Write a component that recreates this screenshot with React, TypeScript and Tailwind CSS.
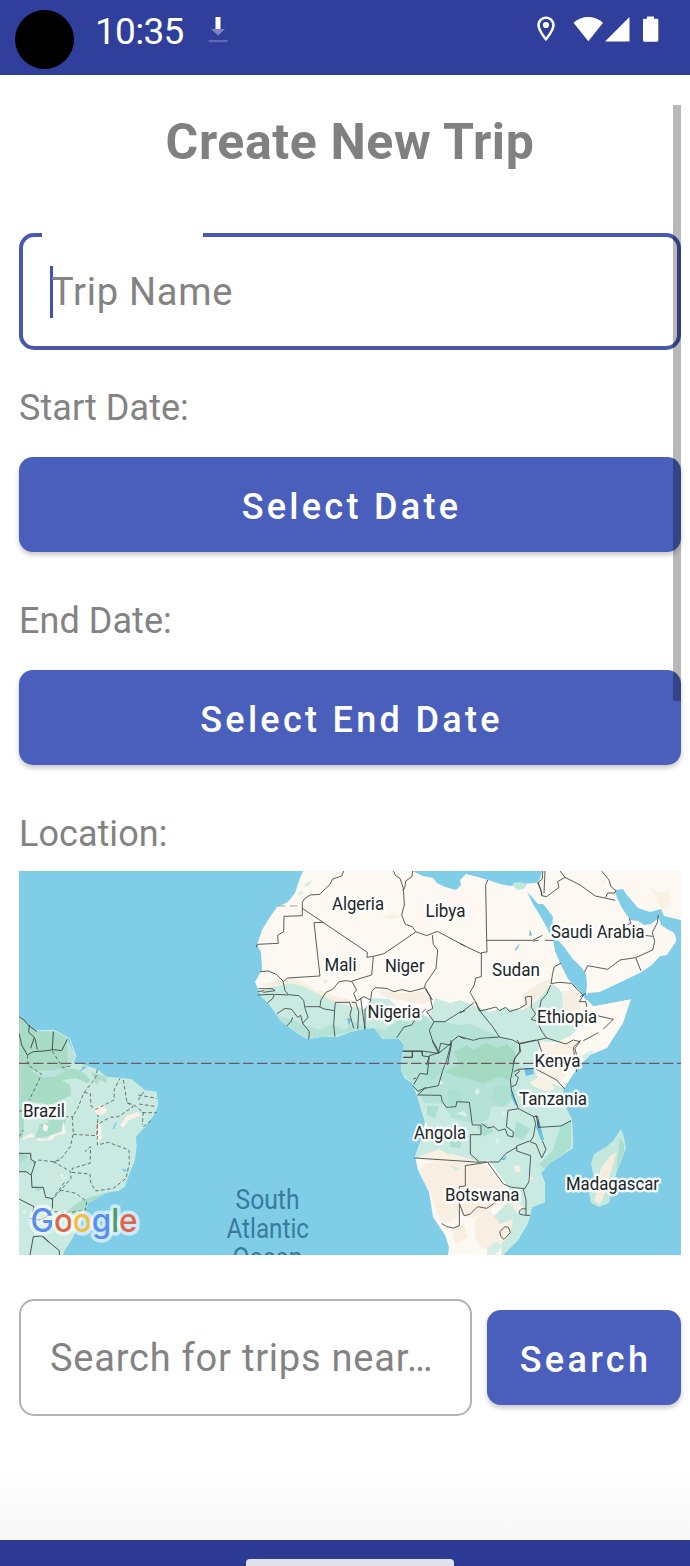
import type { ReactNode } from "react";

function StatusBar() {
  return (
    <header className="flex h-[75px] shrink-0 items-start justify-between bg-[#303f9b] pl-[15px] pr-[31px] text-white">
      <div className="flex items-start">
        <div className="mt-[10px] size-[59px] rounded-full bg-black" />
        <span className="ml-[21px] mt-[10px] w-[91px] text-[37px] leading-[43px] tracking-[-0.700px]">
          10:35
        </span>
        <svg className="ml-[22px] mt-[16px] h-[28px] w-[20px]" viewBox="0 0 20 28">
          <path d="M7.5 1H12.5V13H7.5Z" fill="#fff" />
          <path d="M3 13H17L10 19.5Z" fill="#7985c2" />
          <path d="M.5 24H19.5V26.2H.5Z" fill="#5c6ab4" />
        </svg>
      </div>
      <svg className="mt-[14px] h-[30px] w-[124px]" viewBox="535 14 124 30" fill="#fff">
        <path
          d="M546 16.5c-4.8 0-8.7 3.8-8.7 8.6 0 6.2 8.7 16.2 8.7 16.2s8.7-10 8.7-16.2c0-4.8-3.9-8.6-8.7-8.6Zm0 2.5c3.4 0 6.2 2.7 6.2 6.1 0 3.3-3.2 8.6-6.2 12.3-3-3.7-6.2-9-6.2-12.3 0-3.4 2.8-6.1 6.2-6.1Z"
          fillRule="evenodd"
        />
        <circle cx="546" cy="25" r="3.1" />
        <path d="M573.5 22.8C582 15 594.500 15 603 22.800L588.300 41.200Z" />
        <path d="M629.500 17V41.500H605Z" />
        <path d="M647 16.500H654V18.700H657Q658.300 18.700 658.300 20V40.300Q658.300 41.700 657 41.700H644.300Q643 41.700 643 40.300V20Q643 18.700 644.300 18.700H647Z" />
      </svg>
    </header>
  );
}

function DateButton({ children }: { children: ReactNode }) {
  return (
    <button className="block h-[95px] w-full rounded-[14px] bg-[#4a5fbc] pl-[3px] pt-[4px] text-center text-[36px] font-medium leading-[42px] tracking-[3.300px] text-white shadow-[0_3px_5px_rgba(0,0,0,0.22)]">
      {children}
    </button>
  );
}

const labels = [
  { text: "Algeria", x: 332, y: 910, w: 52 },
  { text: "Libya", x: 425.500, y: 917, w: 40 },
  { text: "Saudi Arabia", x: 551, y: 938, w: 93.500 },
  { text: "Mali", x: 324.500, y: 971, w: 32 },
  { text: "Niger", x: 385, y: 972, w: 39.500 },
  { text: "Sudan", x: 492, y: 976, w: 48 },
  { text: "Nigeria", x: 367.500, y: 1018, w: 53 },
  { text: "Ethiopia", x: 537, y: 1023, w: 60 },
  { text: "Kenya", x: 534.500, y: 1067, w: 46 },
  { text: "Tanzania", x: 519, y: 1105, w: 68 },
  { text: "Angola", x: 414, y: 1139, w: 52 },
  { text: "Madagascar", x: 566, y: 1190, w: 93 },
  { text: "Botswana", x: 445, y: 1201, w: 74.500 },
  { text: "Brazil", x: 23, y: 1117, w: 42 },
];

const AFRICA =
  "M303 871L300 878 295 893 288 902 277 907 270 917 262 930 257 945 261 952 262 970 260 973 255 982 258 989 260 995 268 1003 275 1012 280 1020 290 1028 300 1035 308 1039 320 1037 337 1037 350 1032 363 1029 374 1028 383 1039 399 1039 404 1045 402 1057 401 1070 405 1078 412 1083 417 1095 422 1112 425 1122 422 1137 415 1157 418 1170 429 1192 433 1217 445 1235 449 1247 448 1255H503L518 1240 528 1223 532 1207 545 1202 545 1183 541 1173 550 1163 573 1148 572 1120 566 1108 563 1090 578 1067 590 1055 607 1048 623 1023 631 999 610 1003 593 1006 586 998 588 993 600 992 640 973 667 955 677 940 673 931 664 926 660 916 661 920H681V871Z";

function WorldMap() {
  return (
    <svg
      className="block h-[384px] w-[662px]"
      viewBox="19 871 662 384"
      role="img"
      aria-label="Map"
    >
      <defs>
        <clipPath id="africa">
          <path d={AFRICA} />
        </clipPath>
        <clipPath id="brazil">
          <path d="M27 45L50 70 80 95 135 93 170 115 190 155 198 170 190 190 215 192 262 208 290 230 330 233 365 238 405 270 440 275 445 315 432 345 410 375 378 410 380 440 375 480 355 530 345 560 325 573 290 578 235 610 215 660 185 720 165 750 160 765H27Z" />
        </clipPath>
      </defs>
      <rect x="19" y="871" width="662" height="384" fill="#80cde8" />
      <path d={AFRICA} fill="#fdf8f2" />

      {/* vegetation across central and southern Africa */}
      <g clipPath="url(#africa)">
        <path
          d="M250 994L272 987 290 983 302 985 315 992 330 999 347 1005 365 1009 373 998 389 999 400 1010 430 1017 435 998 450 1003 460 1000 473 1005 490 1012 504 1008 523 1010 538 1000 546 987 553 984 560 990 566 1000 575 1020 584 1023 570 1036 558 1042 541 1042 546 1054 533 1064 537 1076 547 1081 563 1088 580 1100V1152L550 1170 550 1200 532 1210 528 1223 518 1240 501 1257 502 1238 490 1220 507 1203 510 1190 500 1175 489 1160 480 1162 463 1157 450 1154 438 1158 415 1158 427 1125 390 1060 385 1040 300 1050 260 1010Z"
          fill="#c8eae1"
        />
        <path
          d="M268 1011L282 1017 293 1020 304 1025 320 1030 331 1024 344 1030 355 1022 367 1027 385 1030 400 1020 413 1025 419 1010 431 1022 440 1020 457 1025 470 1024 498 1036 517 1044 515 1060 522 1068 512 1080 516 1095 507 1106 492 1107 488 1120 474 1124 452 1118 443 1104 425 1103 412 1083 398 1068 402 1042 388 1041 371 1028 310 1040 290 1029Z"
          fill="#b5e2d6"
        />
        <path
          d="M454 1052L467 1045 473 1050 486 1043 497 1048 507 1044 516 1054 512 1066 509 1080 498 1077 483 1084 470 1079 458 1077 445 1072 459 1064Z"
          fill="#a4d9c2"
        />
        <path
          d="M425 1064L436 1060 443 1069 434 1079 425 1077ZM449 1090L458 1091 463 1101 454 1107 446 1100ZM493 1088L507 1084 512 1097 503 1107 492 1101ZM427 1106L439 1106 435 1118 427 1115ZM477 1127L486 1123 494 1131 484 1137ZM450 1139L463 1137 460 1148 450 1147ZM516 1121L530 1129 523 1140 514 1136ZM561 1125L571 1120 571 1148 556 1159 545 1169 539 1165 553 1150Z"
          fill="#abdfd0"
        />
        <path
          d="M450 1154L464 1158 480 1162 490 1170 503 1186 501 1202 485 1213 474 1218 461 1215 444 1224 437 1213 430 1192 419 1171 426 1163 440 1162ZM475 1220L490 1210 500 1224 513 1219 510 1235 494 1250 482 1248 475 1238ZM451 1229L464 1224 468 1237 456 1244Z"
          fill="#f8efe2"
        />
        <path
          d="M418 1157L431 1152 439 1149 448 1154 450 1160 439 1164ZM530 1082L540 1076 549 1080 555 1088 549 1092 540 1089 533 1086ZM541 1040L552 1044 563 1040 576 1042 573 1054 563 1060 566 1075 556 1084 542 1072 535 1063Z"
          fill="#faf1e5"
        />
        <path
          d="M261 985L281 979 293 978 306 983 316 991 323 991 334 996 347 999 358 1002 354 1007 337 1003 320 995 302 986 288 982 270 988ZM373 990L387 991 403 993 424 992 430 1000 423 1004 405 1001 388 998ZM522 995L538 984 551 978 550 987 537 999 524 1009ZM562 991L577 990 581 1007 573 1019 563 1008Z"
          fill="#f6eee1"
        />
        <path
          d="M651 888L660 893 668 891 671 903 664 912 658 903ZM658 1005L671 1003 668 1017 657 1019ZM380 916L394 914 404 917 392 919ZM598 877L606 880 603 884Z"
          fill="#f8f1e4"
        />
        <path
          d="M306 883L312 880 310 885 304 887ZM297 895L302 891 303 894ZM324 981L328 979 325 984Z"
          fill="#d2ede3"
        />
        <path
          d="M440 1063L448 1060 446 1066ZM475 1092L477 1088 480 1092 477 1095ZM456 1113L465 1111 467 1117ZM495 1138L500 1140 497 1145ZM439 1080L444 1083 440 1085ZM500 1115L504 1109 505 1115Z"
          fill="#e0f0e6"
        />
        <path
          d="M514 1166L519 1165 521 1171 516 1173ZM510 1204L518 1202 524 1208 518 1214ZM528 1175L533 1178 529 1183Z"
          fill="#f4f0e4"
        />
        <path
          d="M581 1056L592 1050 594 1054 586 1061ZM487 1248L496 1242 503 1245 496 1255H487ZM450 1165L460 1168 456 1171Z"
          fill="#d5eee4"
        />
      </g>

      {/* seas, gulfs and lakes */}
      <path
        d="M412 871L423 876 433 878 437 883 445 887 456 890 461 885 460 880 466 874 478 877 488 880 500 884 510 886 521 884 536 883 540 879 542 871Z"
        fill="#80cde8"
      />
      <path d="M513 883L520 882 527 884 524 889 518 890 514 887Z" fill="#bfe6db" />
      <path
        d="M527 892L532 897 538 904 543 904 548 910 553 917 552 928 557 939 565 948 572 958 582 968 586 975 587 985 586 994 594 1000 586 1000 580 991 568 979 561 965 555 951 553 940 547 928 541 917 533 904Z"
        fill="#80cde8"
      />
      <path
        d="M615 890L623 889 627 895 632 901 638 908 650 912 661 909 664 916 681 920V1000L650 1010 631 999 610 1003 594 1006 588 1001 595 994 614 986 640 973 651 966 660 956 668 955 677 942 675 933 667 929 661 925 659 918 651 924 644 925 638 921 630 920 622 908 617 898Z"
        fill="#80cde8"
      />
      <path
        d="M529 936L530 929 532 935ZM515 949L520 943 518 948 515 951ZM524 1068L533 1068 534 1074 526 1076ZM539 1119L541 1128 544 1140 541 1140 536 1127ZM511 1085L513 1095 518 1106 515 1105 511 1096ZM501 1160L507 1155 505 1160ZM347 1018L351 1019 349 1026Z"
        fill="#6cbfe3"
      />

      {/* Madagascar */}
      <path
        d="M621 1129L624 1137 626 1148 622 1159 617 1171 612 1190 609 1203 599 1207 591 1203 589 1193 594 1179 591 1163 594 1154 606 1147 613 1141Z"
        fill="#c4e8dd"
      />
      <path d="M610 1156L617 1152 614 1161 610 1175 606 1190 600 1205 594 1200 600 1185 600 1170Z" fill="#f7eddf" />
      <path d="M620 1138L624 1144 624 1152 619 1165 616 1170 618 1154Z" fill="#a9dece" />

      {/* borders: north-west */}
      <g
        transform="translate(240 865) scale(.333333)"
        fill="none"
        stroke="#3e4643"
        strokeWidth="2.600"
        strokeLinejoin="round"
      >
        <path d="M311 18L305 33 278 42 270 58 247 80 240 88 210 90 193 102 187 112V152L132 154 131 200 113 211 115 235 52 238 49 247" />
        <path d="M187 130L382 262 381 277 400 274 432 266 527 201M250 172L222 173 240 333 142 339 132 349" />
        <path d="M460 18L467 32 480 40 490 70 493 120 485 150 496 178 517 185 527 200 560 212 592 199 675 243M518 18L516 35 497 48 494 70 487 75" />
        <path d="M577 210L580 238 593 255 588 310 557 355 553 369 510 380 486 374 462 380 440 370 405 368 395 380 392 405 372 395 350 408 341 385 350 375 336 350 319 347 297 350 278 373 258 382 243 405 240 425M400 275L395 330 336 348" />
        <path d="M60 320L85 318 109 328 129 348 135 377 145 389 177 392 191 406 195 430 204 457 188 475 182 451 173 457 155 433 135 430 111 446M55 371H98L105 377 70 382M54 380L72 377M54 390L103 388 99 400 82 414M105 388L145 390M158 457L153 470 140 483M188 475L208 500 206 523M197 425L237 425 253 432 284 437 281 480 285 515M284 436L286 412H328L335 430 330 450 341 490M335 412H347L356 440 353 492M362 400L375 493M393 405L375 435V490" />
        <path d="M555 370L570 395 578 430 560 440 582 470 568 496 580 535 596 565 545 558H490M517 558V577H490M545 558L548 573 567 575 560 600M595 565L602 535 630 540 637 528 655 513 675 522M582 470L615 470 660 441 675 438M470 518L492 486 515 480 526 462 557 432M635 535L622 600M556 368L577 405" />
        <path d="M113 123H187" strokeDasharray="22 15" stroke="#9a9996" />
      </g>

      {/* borders: north-east */}
      <g
        transform="translate(460 865) scale(.333333)"
        fill="none"
        stroke="#3e4643"
        strokeWidth="2.600"
        strokeLinejoin="round"
      >
        <path d="M83 45L77 60 80 225 81 261 64 263V335L47 339 43 360 30 382 47 411 58 438 78 434 108 426 118 437 137 427 149 440 179 430 199 418 196 396 215 394 214 427 227 447 214 463 234 470M80 226H218L247 211M220 228L235 226M255 226H280M0 236L65 267" />
        <path d="M300 18L315 37 293 50 297 67 277 82 260 95 245 92 243 75 233 53 247 42 248 18M255 18L252 85M235 52L247 92M315 37L360 60 406 93 466 106M425 18L447 45 453 65 468 77 465 84 443 84 437 97M595 150L592 173 577 202 584 230 578 255 527 278 480 285 443 313 383 302 373 322M527 278L543 318M553 211L578 214M508 160L512 175 502 180" />
        <path d="M303 295L283 305 278 325 273 356 297 352 335 355 355 377 370 391 358 410 378 410 380 425M378 385L360 395M272 360L260 388 244 405 234 450 235 478 248 503 260 519 318 537 340 525 360 530 345 550 350 572 355 600M43 412L0 445M47 412L65 445 98 485 118 516 158 525 178 537 182 560 165 578 160 600M118 516L60 520 40 526 0 515M178 537L233 525 245 560M260 519L232 525M412 452L460 463 430 492M415 503L370 527" />
      </g>

      {/* borders: south */}
      <g
        transform="translate(390 1040) scale(.333333)"
        fill="none"
        stroke="#3e4643"
        strokeWidth="2.600"
        strokeLinejoin="round"
      >
        <path d="M183 0L181 20 170 60 157 95 145 137 105 145 83 165 153 166 157 185 169 202 198 200 200 185 238 187 247 255H273V284H241V342L268 366 293 366M127 0L148 38 118 47 112 103 90 100 72 133M68 137L84 154 108 142M70 117L78 114M37 34H97V48M67 35V52H40M148 38L183 10" />
        <path d="M381 0L389 12 388 35 372 60 368 90 361 120 364 150 385 206 430 229 437 250 430 290 420 305 438 312 455 354 468 328 457 302M390 10L438 0M372 95L385 88 388 95 375 105 385 112 378 135 365 140M386 88L433 85 443 90 500 120 524 147M385 206L354 211 349 260 370 275 369 291 353 287 346 267 325 272 312 260 293 264 275 250M430 229L443 230 448 262 513 258 543 242M438 225L446 265M572 0L550 22 555 60 560 95M418 303L380 318V333L422 347 417 425 404 446 365 442 340 432 293 367M380 322L348 340 326 366 293 366" />
        <path d="M73 354L118 357 198 362 268 367M226 438V377L290 367M226 438L208 440V557L190 564 170 560 155 550M208 490L222 527 240 523 263 500 290 505 310 492 330 470 390 462M400 447L408 480V526L390 523 387 514 396 506 408 507M408 526H420M345 560L329 575 333 590 342 598 350 590 361 577 355 562Z" />
      </g>

      {/* South America */}
      <g transform="translate(10 1000) scale(.333333)">
        <g clipPath="url(#brazil)">
          <rect x="27" y="40" width="430" height="730" fill="#c8eae1" />
          <path d="M27 45L80 95 135 93 170 115 190 155 180 175 170 205 210 210 242 240 232 250 200 235 155 240 180 255 184 285 155 300 120 316 75 305 45 318 40 405 27 430Z" fill="#a8dcc6" />
          <path d="M170 115L182 120 198 170 175 198ZM60 210L130 213 145 205 165 214 130 230 90 232ZM27 460L60 458 70 485 62 518 27 515Z" fill="#bbe5da" />
          <path d="M244 215L288 230 292 250 270 240 258 255ZM90 372L160 360 157 395 105 410 75 415ZM68 558L100 565 85 575ZM230 595L292 577 235 612 210 650 170 636 200 610ZM105 345L170 355 163 375 125 385ZM90 675L140 680 115 705ZM27 455L55 470 27 495Z" fill="#aaddcb" />
          <path d="M27 420L65 398 76 414 110 418 125 405 155 395 160 362 168 402 140 405 125 420 85 423 75 410ZM102 370L116 380 110 395 97 390ZM255 323L275 314 291 329 282 343 265 345 253 335ZM260 370L273 373 276 415 265 430 257 410ZM330 375L350 348 385 335 395 345 355 362 340 383ZM150 523L160 525 155 537ZM35 633L48 630 45 640ZM155 540L165 532 170 535Z" fill="#fbf1e8" />
        </g>
        <path d="M307 388L315 370 322 362 313 387ZM335 505L362 514 340 515ZM210 215L218 197 232 202Z" fill="#80cde8" />
        <path d="M80 92L132 91 165 108 180 118 198 170" fill="none" stroke="#d5efe9" strokeWidth="3" />
        <g fill="none" stroke="#3e4643" strokeWidth="2.800" strokeLinejoin="round">
          <path d="M27 50L42 60 57 78 80 94M27 100L35 135 52 165 70 155 102 153 130 149 155 152 172 118M130 95L127 150M58 75L56 97 73 112 62 145M75 115L82 148M27 460H62L63 478 76 487 64 523 66 562 100 562 107 592 128 596M27 515H48L64 525M27 597L72 620 68 635M128 596L127 625 110 650 90 660 57 655M60 765L70 710 95 708 148 752V765M97 707L118 728" />
        </g>
        <g fill="none" stroke="#59625f" strokeWidth="2.600" strokeDasharray="11 7">
          <path d="M52 165L54 195 95 223 58 300M127 153L158 203 182 198M262 208L257 233 222 278 203 325 187 352 190 400 181 440 150 480 130 485 87 480 70 490M222 278L241 280 243 318 257 328 312 300 313 268 330 235M340 240L351 308 372 315 400 337 397 375M351 308L370 320 325 350 300 352 268 370M385 300L405 270M385 285L440 295M387 312L440 320M397 338L440 338M400 380L425 360M190 403L260 407 264 345M262 372V435L295 427 357 450 358 490 348 535 310 565 257 573 242 547 240 522 185 517 187 505 240 490 242 440 225 455M130 485L182 515 183 535 130 596M130 490L145 475M150 570L198 580 230 605 226 630 185 637 125 635M125 600L165 545M27 410L40 390M27 333H42M165 350H190" />
        </g>
      </g>

      {/* equator */}
      <path d="M19 1063.400H681" stroke="#75585f" strokeWidth="1.2" strokeDasharray="10.500 3.500" />

      {/* place names */}
      <g
        className="font-['Roboto']"
        fontSize="18"
        fill="#202527"
        stroke="#fff"
        strokeOpacity=".88"
        strokeWidth="5"
        strokeLinejoin="round"
        paintOrder="stroke"
      >
        {labels.map((label) => (
          <text
            key={label.text}
            x={label.x}
            y={label.y}
            textLength={label.w}
            lengthAdjust="spacingAndGlyphs"
          >
            {label.text}
          </text>
        ))}
      </g>
      <g className="font-['Roboto']" fontSize="28" fill="#387b9d">
        <text x="235.500" y="1209" textLength="64" lengthAdjust="spacingAndGlyphs">South</text>
        <text x="226.500" y="1238" textLength="82.500" lengthAdjust="spacingAndGlyphs">Atlantic</text>
        <text x="232.500" y="1267" textLength="70" lengthAdjust="spacingAndGlyphs">Ocean</text>
      </g>
      <text
        className="font-['Inter'] font-medium"
        x="30.500"
        y="1232"
        fontSize="32"
        textLength="107"
        lengthAdjust="spacingAndGlyphs"
        stroke="#fff"
        strokeOpacity=".6"
        strokeWidth="7"
        strokeLinejoin="round"
        paintOrder="stroke"
      >
        <tspan fill="#5b8def">G</tspan>
        <tspan fill="#e0654b">o</tspan>
        <tspan fill="#f3bd42">o</tspan>
        <tspan fill="#5b8def">g</tspan>
        <tspan fill="#4c9d61">l</tspan>
        <tspan fill="#e0654b">e</tspan>
      </text>
    </svg>
  );
}

export default function App() {
  return (
    <div className="relative flex h-[1566px] w-[690px] flex-col overflow-hidden bg-white font-['Roboto',sans-serif]">
      <StatusBar />
      <main className="flex grow flex-col bg-[linear-gradient(to_bottom,#fff_95%,#f7f7f7_100%)] pl-[19px] pr-[9px] text-[#838383]">
        <h1 className="mt-[38px] text-center text-[50px] font-bold leading-[58px] tracking-[0.600px] text-[#808080]">
          Create New Trip
        </h1>

        <div className="relative mt-[62px] flex h-[117px] items-center rounded-[15px] border-4 border-[#4658b0] pl-[27px]">
          <div className="absolute left-[19px] top-[-4px] h-[4px] w-[161px] bg-white" />
          <div className="h-[52px] w-[3px] bg-[#3f51b5]" />
          <span className="ml-[-2px] text-[38px] leading-[44px] tracking-[0.750px]">Trip Name</span>
        </div>

        <div className="mt-[37px] text-[36px] leading-[42px] tracking-[0.050px]">Start Date:</div>
        <div className="mt-[28px]">
          <DateButton>Select Date</DateButton>
        </div>

        <div className="mt-[48px] text-[36px] leading-[42px] tracking-[0.050px]">End Date:</div>
        <div className="mt-[28px]">
          <DateButton>Select End Date</DateButton>
        </div>

        <div className="mt-[48px] text-[36px] leading-[42px] tracking-[0.050px]">Location:</div>
        <div className="mt-[16px]">
          <WorldMap />
        </div>

        <div className="mt-[44px] flex items-center gap-[15px]">
          <div className="flex h-[117px] w-[453px] items-center rounded-[15px] border-2 border-[#b3b3b3] pl-[29px] text-[38px] leading-[44px] tracking-[0.780px]">
            Search for trips near…
          </div>
          <div className="grow">
            <DateButton>Search</DateButton>
          </div>
        </div>
      </main>
      <footer className="flex h-[26px] shrink-0 justify-center bg-[#2e3b94] pr-px pl-[11px]">
        <div className="mt-[19px] h-[12px] w-[208px] rounded-[4px] bg-[#dfe1eb]" />
      </footer>
      <div className="absolute left-[673px] top-[105px] h-[596px] w-[8px] bg-black/28" />
    </div>
  );
}
